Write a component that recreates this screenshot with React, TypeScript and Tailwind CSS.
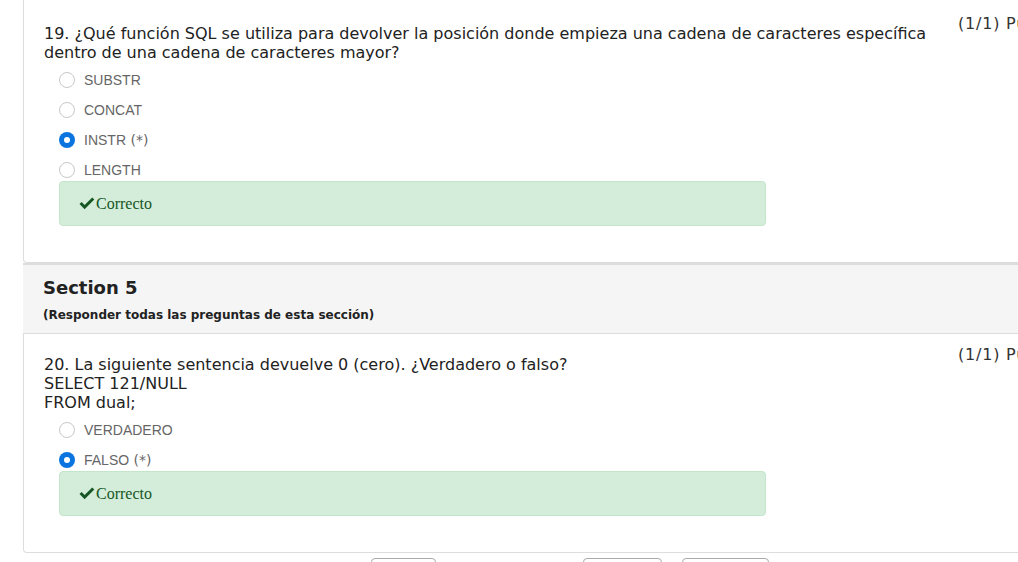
const font = { fontFamily: "Verdana, 'DejaVu Sans', sans-serif" };

type Option = { label: string; mark?: boolean; checked?: boolean };

function Radio({ checked }: { checked?: boolean }) {
  if (checked) {
    return (
      <span className="w-4 h-4 rounded-full bg-[#0b74de] flex items-center justify-center shrink-0">
        <span className="w-[6px] h-[6px] rounded-full bg-white" />
      </span>
    );
  }
  return <span className="w-4 h-4 rounded-full border border-[#c8c8c8] bg-white shrink-0" />;
}

function Options({ items }: { items: Option[] }) {
  return (
    <div className="flex flex-col pl-[35px] pt-[3px]">
      {items.map((o) => (
        <div key={o.label} className="h-[30px] flex items-center gap-[9px]">
          <Radio checked={o.checked} />
          <span className="text-[14px] text-[#666] font-['Liberation_Sans',Arial,sans-serif]">
            {o.label}
            {o.mark && <span className="font-['DejaVu_Sans',sans-serif] text-[14px]"> (*)</span>}
          </span>
        </div>
      ))}
    </div>
  );
}

function Correcto() {
  return (
    <div className="ml-[35px] mt-[-4px] w-[707px] h-[45px] rounded-[4px] border border-[#c3e6cb] bg-[#d4edda] flex items-center pl-[19px]">
      <span className="text-[16px] text-[#155724] font-['Liberation_Serif','Times_New_Roman',serif] flex items-center">
        <svg width="16" height="13" viewBox="0 0 16 13" className="mr-[1px]">
          <path d="M0.5 7 L2.6 4.9 L5.6 7.9 L13.2 0.5 L15.3 2.6 L5.6 12.2 Z" fill="#155724" />
        </svg>
        Correcto
      </span>
    </div>
  );
}

function Points() {
  return (
    <div className="text-[16px] leading-[19px] text-[#333] whitespace-nowrap tracking-[0.8px]">
      (1/1) Puntos
    </div>
  );
}

export default function App() {
  return (
    <div className="w-[1018px] h-[562px] overflow-hidden bg-white" style={font}>
      <div className="ml-[23px] w-[1100px]">
        {/* question 19 */}
        <div className="border-x border-b border-[#ddd] rounded-b-[4px] h-[263px]">
          <div className="flex pt-[14px] pl-[20px]">
            <div className="w-[895px] mt-[10px] text-[16px] leading-[19px] text-[#222]">
              19. ¿Qué función SQL se utiliza para devolver la posición donde empieza una cadena de caracteres específica dentro de una cadena de caracteres mayor?
            </div>
            <div className="ml-[19px]">
              <Points />
            </div>
          </div>
          <Options
            items={[
              { label: "SUBSTR" },
              { label: "CONCAT" },
              { label: "INSTR", mark: true, checked: true },
              { label: "LENGTH" },
            ]}
          />
          <Correcto />
        </div>

        {/* section header */}
        <div className="bg-[#f5f5f5] border-t-2 border-b border-[#ddd] h-[71px] pl-[20px] pt-[12px] text-[#222]">
          <div className="text-[18px] leading-[22px] font-bold">Section 5</div>
          <div className="text-[12px] leading-[15px] font-bold mt-[9px]">
            (Responder todas las preguntas de esta sección)
          </div>
        </div>

        {/* question 20 */}
        <div className="border-x border-b border-[#ddd] rounded-b-[4px] h-[219px]">
          <div className="flex pt-[11px] pl-[20px]">
            <div className="w-[895px] mt-[10px] text-[16px] leading-[19px] text-[#222]">
              <div>20. La siguiente sentencia devuelve 0 (cero). ¿Verdadero o falso?</div>
              <div>SELECT 121/NULL</div>
              <div>FROM dual;</div>
            </div>
            <div className="ml-[19px]">
              <Points />
            </div>
          </div>
          <Options items={[{ label: "VERDADERO" }, { label: "FALSO", mark: true, checked: true }]} />
          <Correcto />
        </div>
      </div>

      {/* bottom buttons */}
      <div className="flex mt-[5px]">
        <div className="ml-[371px] w-[65px] h-[20px] border border-[#aaa] rounded-[4px]" />
        <div className="ml-[147px] w-[79px] h-[20px] border border-[#aaa] rounded-[4px]" />
        <div className="ml-[20px] w-[87px] h-[20px] border border-[#aaa] rounded-[4px]" />
      </div>
    </div>
  );
}
